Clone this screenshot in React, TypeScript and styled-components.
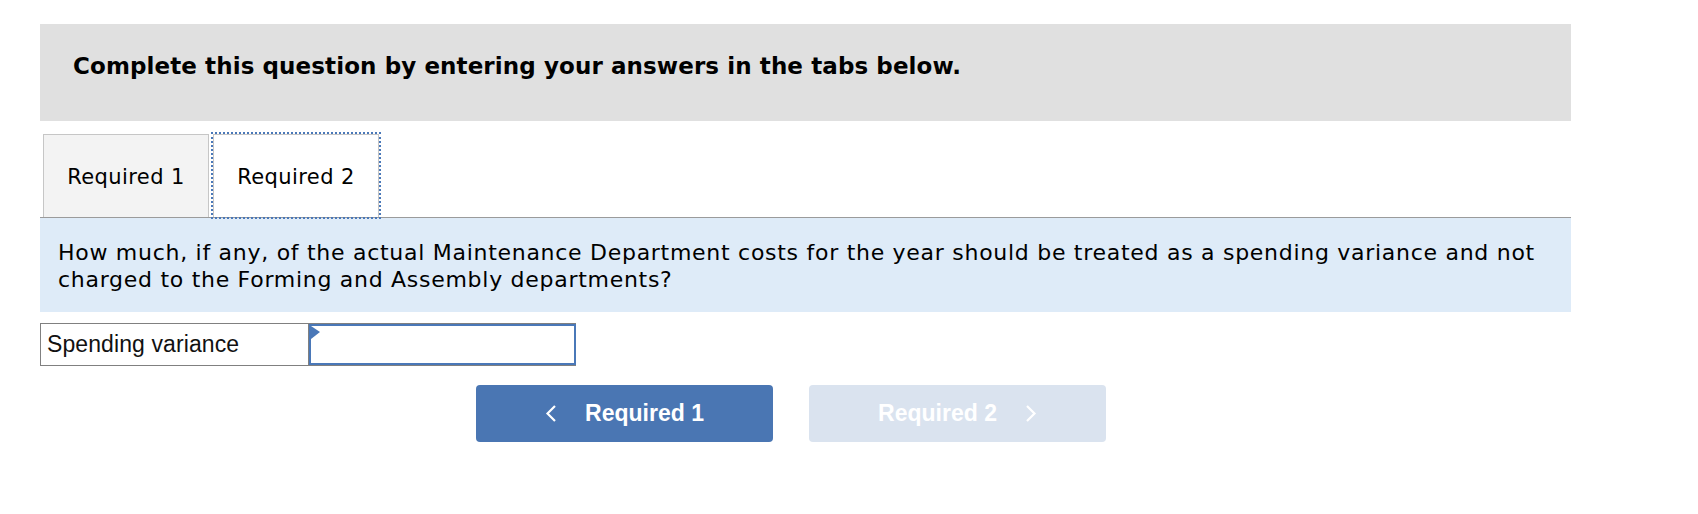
import styled, { createGlobalStyle } from 'styled-components';

const GlobalStyle = createGlobalStyle`
    body {
        margin: 0;
        background: #ffffff;
        font-family: "DejaVu Sans", Verdana, sans-serif;
        color: #000000;
    }
`;

const Page = styled.div`
    width: 1531px;
    padding: 24px 0 0 40px;
`;

const Banner = styled.div`
    background: #e0e0e0;
    height: 97px;
    box-sizing: border-box;
    padding: 29px 0 0 33px;
    font-size: 23px;
    font-weight: bold;
    letter-spacing: 0.1px;
`;

const TabBar = styled.div`
    display: flex;
    align-items: flex-end;
    gap: 4px;
    margin-top: 13px;
    padding-left: 3px;
    border-bottom: 1px solid #9b9b9b;
`;

const Tab = styled.div<{ $active?: boolean }>`
    width: 166px;
    height: 83px;
    box-sizing: border-box;
    display: flex;
    align-items: center;
    justify-content: center;
    border: 1px solid #c6c6c6;
    border-bottom: none;
    background: ${(p) => (p.$active ? '#ffffff' : '#f3f3f3')};
    outline: ${(p) => (p.$active ? '2px dotted #4a78b8' : 'none')};
    font-size: 21px;
    letter-spacing: 0.4px;
    padding-top: 2px;
`;

const Prompt = styled.div`
    background: #deebf8;
    height: 94px;
    box-sizing: border-box;
    padding: 21px 18px 0;
    font-size: 22px;
    letter-spacing: 0.72px;
    line-height: 27px;
`;

const AnswerRow = styled.div`
    display: flex;
    margin-top: 11px;
`;

const Label = styled.div`
    width: 269px;
    height: 43px;
    box-sizing: border-box;
    border: 1px solid #808080;
    display: flex;
    align-items: center;
    padding-left: 6px;
    font-family: "Liberation Sans", Arial, sans-serif;
    font-size: 23px;
    letter-spacing: 0.1px;
    color: #111;
`;

const InputCell = styled.div`
    position: relative;
    width: 267px;
    height: 43px;
    box-sizing: border-box;
    border-top: 1px solid #808080;
    border-bottom: 1px solid #808080;
`;

const AmountInput = styled.input`
    display: block;
    width: 100%;
    height: 41px;
    box-sizing: border-box;
    margin: 0;
    border: 2px solid #4a78b8;
    background: #ffffff;
    outline: none;
    font-family: "Liberation Sans", Arial, sans-serif;
    font-size: 22px;
`;

const Flag = styled.svg`
    position: absolute;
    left: 2px;
    top: 2px;
`;

const NavRow = styled.div`
    display: flex;
    gap: 36px;
    margin-top: 19px;
    padding-left: 436px;
`;

const NavButton = styled.button<{ $disabled?: boolean }>`
    width: 297px;
    height: 57px;
    border: none;
    border-radius: 4px;
    background: ${(p) => (p.$disabled ? '#dae3ef' : '#4a76b3')};
    color: #ffffff;
    display: flex;
    align-items: center;
    justify-content: center;
    gap: 28px;
    padding: 0;
    font-family: "Liberation Sans", Arial, sans-serif;
    font-size: 23px;
    font-weight: bold;
    cursor: ${(p) => (p.$disabled ? 'default' : 'pointer')};
`;

function Chevron({ dir }: { dir: 'left' | 'right' }) {
    const d = dir === 'left' ? 'M10 1 L2.5 8.5 L10 16' : 'M2 1 L9.5 8.5 L2 16';
    return (
        <svg width="12" height="17" viewBox="0 0 12 17">
            <path d={d} fill="none" stroke="#ffffff" strokeWidth="2.2" />
        </svg>
    );
}

export default function App() {
    return (
        <Page>
            <GlobalStyle />
            <Banner>Complete this question by entering your answers in the tabs below.</Banner>
            <TabBar>
                <Tab>Required 1</Tab>
                <Tab $active>Required 2</Tab>
            </TabBar>
            <Prompt>
                How much, if any, of the actual Maintenance Department costs for the year should be treated as a
                spending variance and not charged to the Forming and Assembly departments?
            </Prompt>
            <AnswerRow>
                <Label>Spending variance</Label>
                <InputCell>
                    <AmountInput type="text" aria-label="Spending variance" />
                    <Flag width="9" height="13" viewBox="0 0 9 13">
                        <polygon points="0,0 9,6 0,13" fill="#4a78b8" />
                    </Flag>
                </InputCell>
            </AnswerRow>
            <NavRow>
                <NavButton>
                    <Chevron dir="left" />
                    Required 1
                </NavButton>
                <NavButton $disabled>
                    Required 2
                    <Chevron dir="right" />
                </NavButton>
            </NavRow>
        </Page>
    );
}
